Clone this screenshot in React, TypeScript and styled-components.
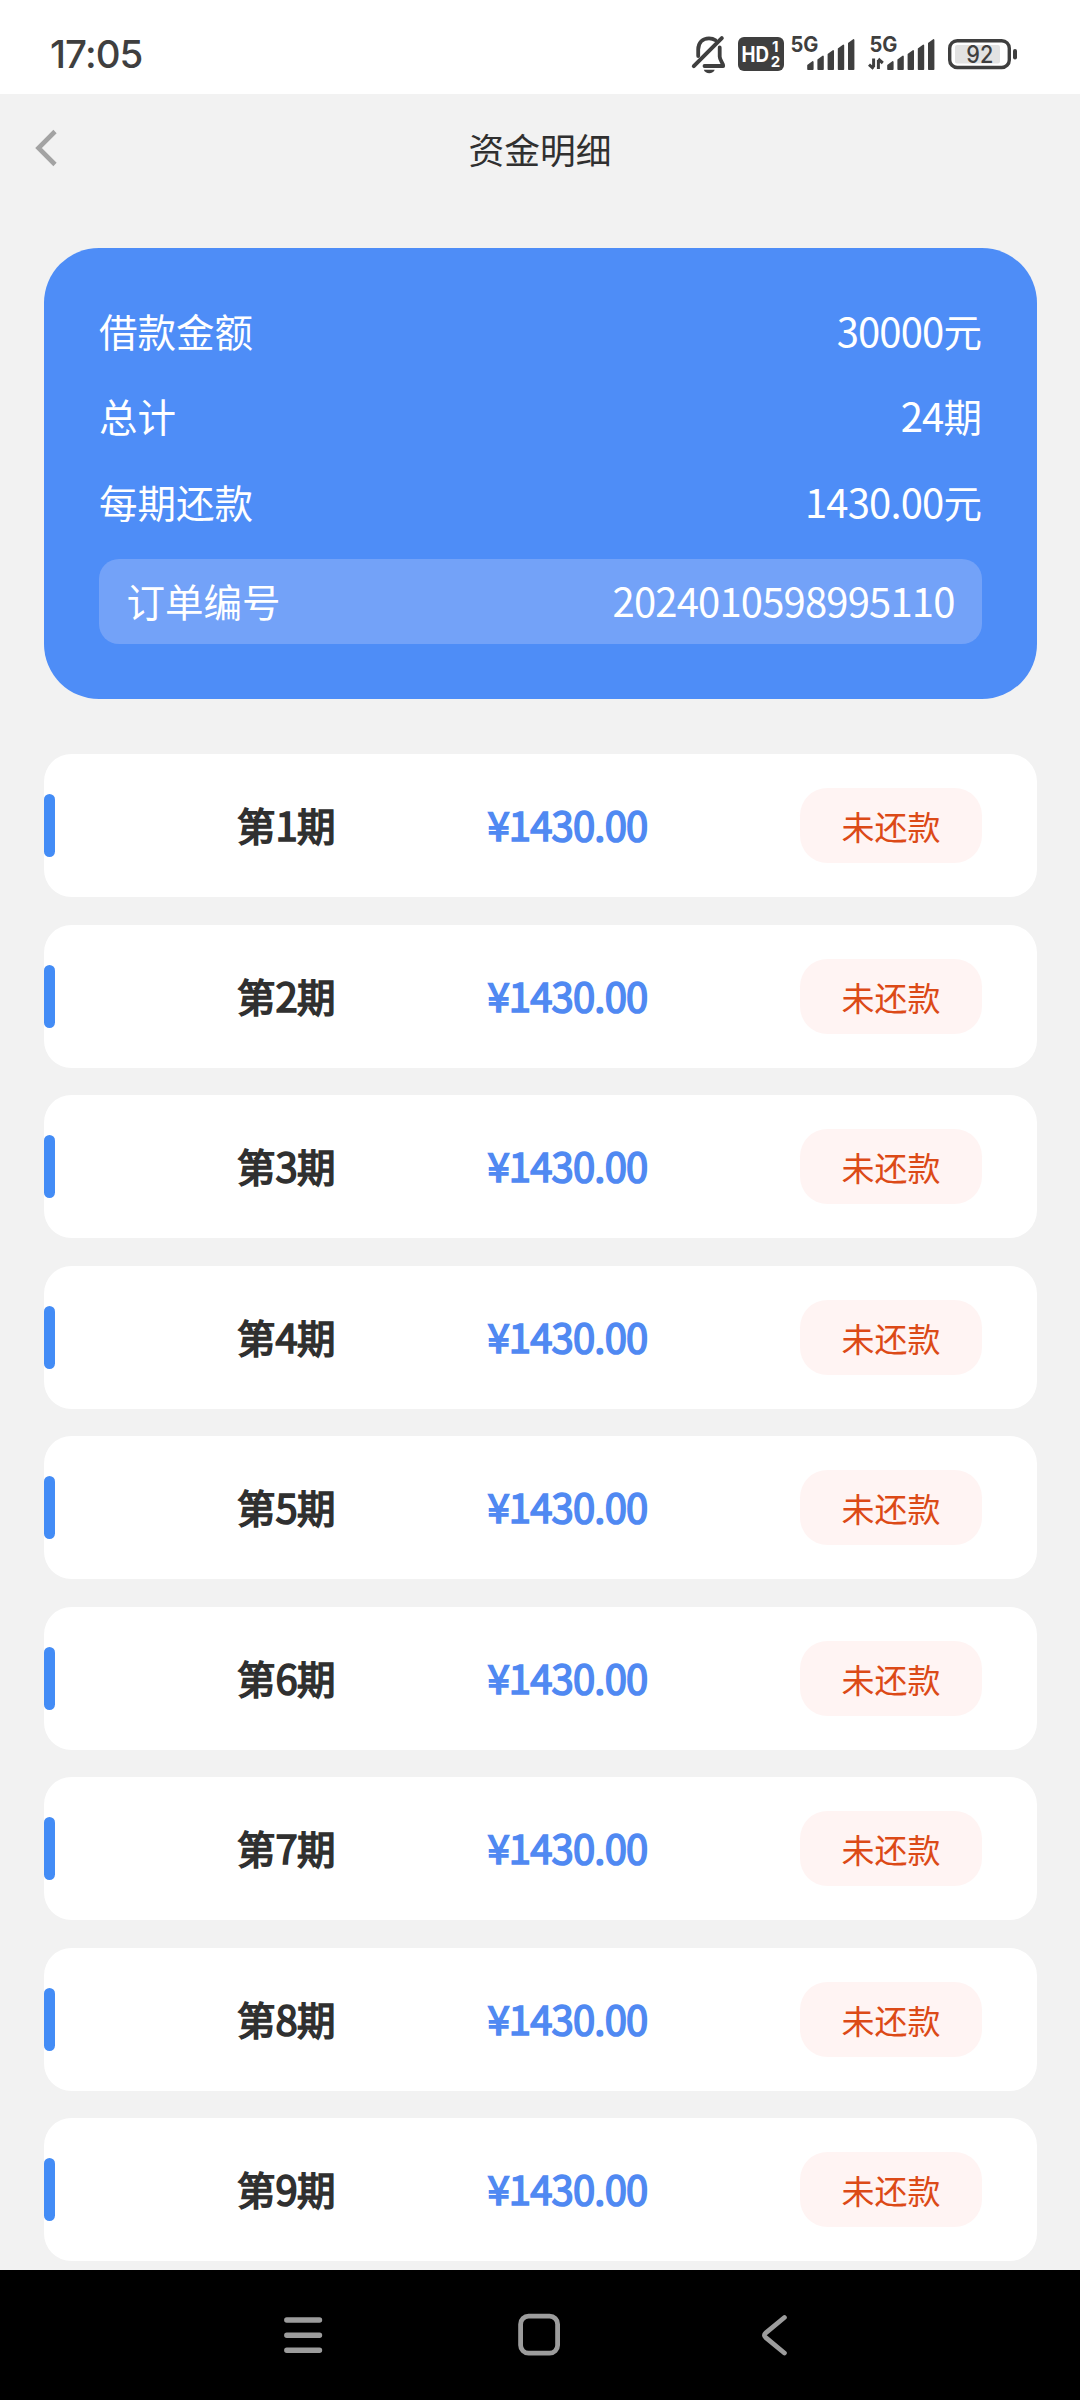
import React from "react";
import styled, { createGlobalStyle } from "styled-components";

const INK = "#3f3f3f";
const BLUE = "#4e8df7";

const GlobalStyle = createGlobalStyle`
  * { box-sizing: border-box; }
  body {
    margin: 0;
    background: #f2f2f2;
    font-family: "Noto Sans CJK SC", "Noto Sans", sans-serif;
  }
`;

const Screen = styled.div`
  width: 1080px;
  height: 2400px;
  display: flex;
  flex-direction: column;
  overflow: hidden;
  background: #f2f2f2;
`;

const StatusBar = styled.header`
  height: 94px;
  flex: none;
  display: flex;
  justify-content: space-between;
  padding: 32px 62px 0 50px;
  background: #fff;
`;

const Clock = styled.span`
  font: 500 38.5px/45px Inter, sans-serif;
  letter-spacing: -0.9px;
  color: ${INK};
`;

const StatusIcons = styled.div`
  display: flex;
  height: 44px;
`;

const StatusIcon = styled.svg<{ $gap?: number }>`
  display: block;
  flex: none;
  height: 44px;
  margin-left: ${(p) => p.$gap ?? 0}px;
  font-family: Inter, sans-serif;
`;

const TitleBar = styled.div`
  height: 112px;
  flex: none;
  display: grid;
  grid-template-columns: 100px 1fr 100px;
  align-items: center;
`;

const BackButton = styled.button`
  display: flex;
  padding: 0 0 4px 33px;
  border: 0;
  background: none;
`;

const Title = styled.h1`
  margin: 0 0 3px;
  text-align: center;
  font-size: 35.75px;
  line-height: 50px;
  font-weight: 400;
  color: #303030;
`;

const Content = styled.main`
  flex: 1;
  min-height: 0;
  overflow: hidden;
  padding: 42px 43px 0 44px;
`;

const SummaryCard = styled.section`
  height: 451px;
  padding: 39px 55px 55px;
  border-radius: 55px;
  background: ${BLUE};
  color: #fff;
`;

const SummaryRow = styled.div`
  height: 85.6px;
  display: flex;
  align-items: center;
  justify-content: space-between;
  font-size: 38.5px;
  line-height: 58px;
`;

const OrderRow = styled(SummaryRow)`
  height: 85px;
  margin-top: 15px;
  padding: 0 27.5px 2px;
  border-radius: 20px;
  background: #73a2f8;
`;

const Digits = styled.span`
  font-size: 40px;
  letter-spacing: -0.83px;
`;

const PlanList = styled.ul`
  list-style: none;
  margin: 55px 0 0;
  padding: 0;
  display: flex;
  flex-direction: column;
  gap: 27.5px;
`;

const PlanRow = styled.li`
  height: 143px;
  flex: none;
  display: flex;
  align-items: center;
  padding-right: 55px;
  border-radius: 27.5px;
  background: #fff;
`;

const Marker = styled.i`
  width: 11px;
  height: 63px;
  border-radius: 5.5px;
  background: #438cf6;
`;

const Period = styled.strong`
  width: 250.5px;
  margin: 0 0 3px 182px;
  font-size: 38.5px;
  line-height: 58px;
  font-weight: 400;
  -webkit-text-stroke: 1.6px currentColor;
  color: #303030;
`;

const Amount = styled(Period)`
  width: auto;
  margin-left: 0;
  color: #5089f2;
`;

const StateTag = styled.span`
  width: 182px;
  height: 75px;
  margin-left: auto;
  display: flex;
  align-items: center;
  justify-content: center;
  padding-top: 1.5px;
  border-radius: 27.5px;
  background: #fff4f3;
  font-size: 33px;
  color: #dc4a17;
`;

const NavBar = styled.nav`
  height: 130px;
  flex: none;
  display: flex;
  justify-content: space-between;
  align-items: center;
  padding: 0 281px;
  background: #000;
`;

const NavIcon = styled.svg`
  display: block;
  width: 44px;
  height: 44px;
  fill: none;
  stroke: #9c9c9c;
  stroke-linecap: round;
  stroke-linejoin: round;
`;

const SignalBars = ({ x }: { x: number }) => (
  <g fill={INK} stroke={INK} strokeWidth="1.6" strokeLinejoin="round">
    {[0, 1, 2, 3, 4].map((i) => {
      const left = x + i * 10.2;
      const top = 30.5 - i * 5.5;
      return <path key={i} d={`M${left} 37.2V${top + 3}L${left + 4.8} ${top - 0.6}V37.2Z`} />;
    })}
  </g>
);

const MutedBell = () => (
  <StatusIcon width="38" viewBox="0 0 38 44" fill="none" stroke={INK} strokeLinecap="round">
    <path d="M8.2 24V17.5C8.2 10.5 12.7 6.3 19 6.3C21.5 6.3 23.8 7 25.5 8.2" strokeWidth="3.8" />
    <path d="M29.7 15.5V24.5C29.7 28.6 33.2 30.5 33.2 34H14.5" strokeWidth="3.8" strokeLinejoin="round" />
    <path d="M3.8 34.2L31.8 6.2" strokeWidth="4" />
    <path d="M13.8 37.8H24.7C23.4 42.3 15.1 42.3 13.8 37.8Z" fill={INK} stroke="none" />
  </StatusIcon>
);

const HdBadge = () => (
  <StatusIcon $gap={10} width="46" viewBox="0 0 46 44" fill="#fff" fontWeight="700">
    <rect y="5" width="46" height="34" rx="6" fill={INK} />
    <text x="3.5" y="29.5" fontSize="21" textLength="27.5" lengthAdjust="spacingAndGlyphs">HD</text>
    <text x="34" y="20.3" fontSize="15">1</text>
    <text x="32.8" y="34.9" fontSize="15">2</text>
  </StatusIcon>
);

const Signal = ({ active }: { active?: boolean }) => (
  <StatusIcon $gap={active ? 13.5 : 5.5} width={active ? 68 : 65} viewBox={active ? "0 0 68 44" : "0 0 65 44"}>
    <text x={active ? 1.5 : 0.5} y="20" fontSize="21.5" fontWeight="700" fill={INK} textLength="28" lengthAdjust="spacingAndGlyphs">5G</text>
    <SignalBars x={active ? 20 : 18} />
    {active && (
      <path d="M5.6 26.5V35M5.6 36.7L1 32.6M10.4 37V28M10.2 27L14.8 31" fill="none" stroke={INK} strokeWidth="3" />
    )}
  </StatusIcon>
);

const Battery = () => (
  <StatusIcon $gap={12} width="70" viewBox="0 0 70 44">
    <rect x="1.7" y="8.7" width="59.6" height="26.8" rx="7.5" fill="none" stroke={INK} strokeWidth="3.4" />
    <rect x="7" y="13" width="45" height="18.5" rx="2" fill="#e2e2e2" />
    <text x="18.3" y="31" fontSize="24" fontWeight="500" fill={INK} textLength="27" lengthAdjust="spacingAndGlyphs">92</text>
    <rect x="65" y="17" width="4" height="10.5" rx="2" fill={INK} />
  </StatusIcon>
);

const summary = [
  { label: "借款金额", value: "30000", unit: "元" },
  { label: "总计", value: "24", unit: "期" },
  { label: "每期还款", value: "1430.00", unit: "元" },
];

const periods = [1, 2, 3, 4, 5, 6, 7, 8, 9];

export default function App() {
  return (
    <Screen>
      <GlobalStyle />
      <StatusBar>
        <Clock>17:05</Clock>
        <StatusIcons>
          <MutedBell />
          <HdBadge />
          <Signal />
          <Signal active />
          <Battery />
        </StatusIcons>
      </StatusBar>
      <TitleBar>
        <BackButton aria-label="返回">
          <svg width="26" height="40" viewBox="0 0 26 40" fill="none" stroke="#a3a3a3" strokeWidth="4.6">
            <path d="M22 3.5L5.5 20L22 36.5" />
          </svg>
        </BackButton>
        <Title>资金明细</Title>
      </TitleBar>
      <Content>
        <SummaryCard>
          {summary.map(({ label, value, unit }) => (
            <SummaryRow key={label}>
              <span>{label}</span>
              <span>
                <Digits>{value}</Digits>
                {unit}
              </span>
            </SummaryRow>
          ))}
          <OrderRow>
            <span>订单编号</span>
            <Digits>2024010598995110</Digits>
          </OrderRow>
        </SummaryCard>
        <PlanList>
          {periods.map((n) => (
            <PlanRow key={n}>
              <Marker />
              <Period>
                第<Digits>{n}</Digits>期
              </Period>
              <Amount>
                <Digits>¥1430.00</Digits>
              </Amount>
              <StateTag>未还款</StateTag>
            </PlanRow>
          ))}
        </PlanList>
      </Content>
      <NavBar>
        <NavIcon viewBox="0 0 44 44" strokeWidth="5.4">
          <path d="M5.8 7H38.5M5.8 22.2H38.5M5.8 37.3H38.5" />
        </NavIcon>
        <NavIcon viewBox="0 0 44 44" strokeWidth="4.8">
          <rect x="2.6" y="3.2" width="37" height="37" rx="8" />
        </NavIcon>
        <NavIcon viewBox="0 0 44 44" strokeWidth="4.8">
          <path d="M29.4 4.5L10.8 19.8Q8 22.2 10.8 24.6L29.4 40" />
        </NavIcon>
      </NavBar>
    </Screen>
  );
}
